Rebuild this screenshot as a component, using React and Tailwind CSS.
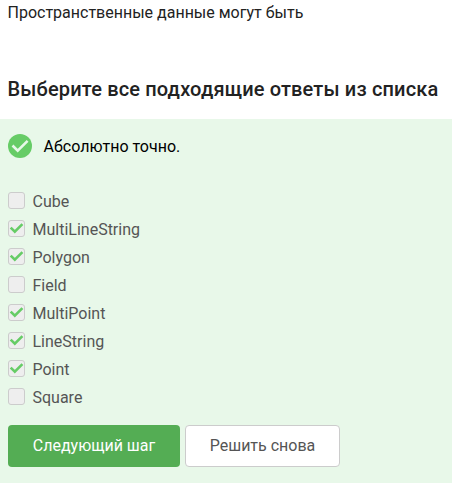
const options = [
  { label: 'Cube', checked: false },
  { label: 'MultiLineString', checked: true },
  { label: 'Polygon', checked: true },
  { label: 'Field', checked: false },
  { label: 'MultiPoint', checked: true },
  { label: 'LineString', checked: true },
  { label: 'Point', checked: true },
  { label: 'Square', checked: false },
];

function Option({ label, checked }) {
  return (
    <li className="flex h-7 items-start gap-[7.5px]">
      <span className="mt-1 flex size-[17px] shrink-0 items-center justify-center rounded-[3px] border border-[#ccc] bg-[#eee]">
        {checked && (
          <svg className="size-[15px] shrink-0" viewBox="0 0 15 15" fill="none" stroke="#66cc66" strokeWidth="2.6">
            <path d="M1.7 6.6 5.8 10.7 13.4 3.1" />
          </svg>
        )}
      </span>
      <span className="leading-7">{label}</span>
    </li>
  );
}

export default function App() {
  return (
    <main className="flex h-[483px] w-full flex-col overflow-hidden bg-white font-['Roboto',sans-serif] text-base leading-6 text-[#222]">
      <p className="pt-px pl-[7.5px]">Пространственные данные могут быть</p>
      <h2 className="mt-[50px] pl-[7.5px] text-xl leading-7 font-medium tracking-[0.155px] whitespace-nowrap">
        Выберите все подходящие ответы из списка
      </h2>
      <section className="mt-4 flex-1 bg-[#e8f8e9] px-2 pt-[15px]">
        <div className="flex h-6 items-start gap-[11.5px] text-black">
          <svg className="size-6" viewBox="0 0 24 24">
            <circle cx="12" cy="12" r="12" fill="#66cc66" />
            <path d="M4.5 11.5 9.7 16.7 19.6 6.8" fill="none" stroke="#e8f8e9" strokeWidth="2.6" />
          </svg>
          <span className="leading-[26px]">Абсолютно точно.</span>
        </div>
        <ul className="mt-[30px] text-[#555]">
          {options.map((option) => (
            <Option key={option.label} {...option} />
          ))}
        </ul>
        <div className="mt-[13px] flex gap-[5px]">
          <button className="h-[42px] w-[172px] rounded bg-[#54ad54] text-white">Следующий шаг</button>
          <button className="h-[42px] w-[155px] rounded border border-[#ccc] bg-white text-[#555]">Решить снова</button>
        </div>
      </section>
    </main>
  );
}
